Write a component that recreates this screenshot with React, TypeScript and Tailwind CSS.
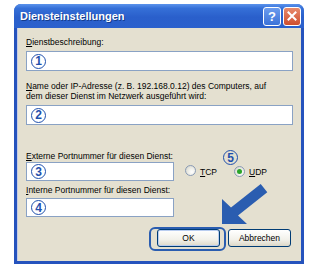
import React from "react";

function Num({ n }: { n: string }) {
  return (
    <span className="inline-flex items-center justify-center w-[15px] h-[15px] rounded-full border-[1.5px] border-[#1f50ad] text-[#1f50ad] text-[12px] font-bold leading-none">
      {n}
    </span>
  );
}

function Radio({ checked }: { checked?: boolean }) {
  return (
    <span className="inline-flex items-center justify-center w-[11px] h-[11px] rounded-full border border-[#8a9bb5] bg-[radial-gradient(circle_at_65%_65%,#ffffff_0%,#e8e8e0_55%,#c9cbc2_100%)]">
      {checked && <span className="w-[5px] h-[5px] rounded-full bg-[#2aa52a]" />}
    </span>
  );
}

export default function App() {
  return (
    <div className="relative w-[319px] h-[264px] bg-white pl-[14px] pt-[4px] overflow-hidden font-['Liberation_Sans',Arial,sans-serif] text-black">
      <div className="w-[290px] h-[260px] flex flex-col rounded-t-[7px] bg-[#2553bd]">
        {/* Title bar */}
        <div className="h-[24px] flex items-center pl-[6px] pr-[3px] rounded-t-[7px] bg-[linear-gradient(180deg,#5b93ec_0%,#3570d8_18%,#2a5fcb_55%,#2b61cd_100%)]">
          <span className="flex-1 text-white font-bold text-[11px] leading-none [text-shadow:1px_1px_0_#143c8c]">
            Diensteinstellungen
          </span>
          <div className="flex gap-[2px]">
            <div className="w-[18px] h-[19px] rounded-[3px] border border-white bg-[linear-gradient(180deg,#6c9cee,#3c72d8)] flex items-center justify-center text-white font-bold text-[13px] leading-none">
              ?
            </div>
            <div className="w-[18px] h-[19px] rounded-[3px] border border-white bg-[linear-gradient(180deg,#e88a6c,#cf4f2f)] flex items-center justify-center">
              <svg width="10" height="10" viewBox="0 0 10 10">
                <path d="M1.5 1.5 L8.5 8.5 M8.5 1.5 L1.5 8.5" stroke="white" strokeWidth="2" strokeLinecap="square" />
              </svg>
            </div>
          </div>
        </div>
        {/* Body */}
        <div className="flex-1 mx-[3px] mb-[3px] bg-[#e4e0d0] border-l border-[#c4cbe6] pt-[9px] pl-[8px] pr-[8px] flex flex-col text-[8.5px] leading-[10px]">
          <div>
            <u>D</u>ienstbeschreibung:
          </div>
          <div className="mt-[4px] h-[20px] bg-white border border-[#8aa2c4] flex items-center pl-[4px]">
            <Num n="1" />
          </div>
          <div className="mt-[10px]">
            <u>N</u>ame oder IP-Adresse (z. B. 192.168.0.12) des Computers, auf
            <br />
            dem dieser Dienst im Netzwerk ausgeführt wird:
          </div>
          <div className="mt-[4px] h-[20px] bg-white border border-[#8aa2c4] flex items-center pl-[4px]">
            <Num n="2" />
          </div>
          <div className="mt-[26px]">
            <u>E</u>xterne Portnummer für diesen Dienst:
          </div>
          <div className="mt-[1px] flex items-center relative">
            <div className="w-[148px] h-[19px] bg-white border border-[#8aa2c4] flex items-center pl-[4px]">
              <Num n="3" />
            </div>
            <span className="ml-[11px]">
              <Radio />
            </span>
            <span className="ml-[4px]">
              <u>T</u>CP
            </span>
            <span className="ml-[17px]">
              <Radio checked />
            </span>
            <span className="ml-[4px]">
              <u>U</u>DP
            </span>
            <span className="absolute left-[197px] -top-[12px]">
              <Num n="5" />
            </span>
          </div>
          <div className="mt-[4px]">
            <u>I</u>nterne Portnummer für diesen Dienst:
          </div>
          <div className="mt-[3px] w-[148px] h-[19px] bg-white border border-[#8aa2c4] flex items-center pl-[4px]">
            <Num n="4" />
          </div>
          <div className="mt-[12px] mr-[2px] flex justify-end gap-[8px]">
            <div className="relative">
              <div className="w-[63px] h-[18px] rounded-[3px] border border-[#003c74] bg-[linear-gradient(180deg,#ffffff,#f2f1ea_60%,#dcd8c8)] flex items-center justify-center shadow-[inset_0_0_0_1px_#b9cdf0]">
                OK
              </div>
              <div className="absolute -left-[8px] -right-[6px] -top-[2px] -bottom-[4px] border-[2.5px] border-[#2a5db0] rounded-[6px]" />
            </div>
            <div className="w-[63px] h-[18px] rounded-[3px] border border-[#003c74] bg-[linear-gradient(180deg,#ffffff,#f2f1ea_60%,#dcd8c8)] flex items-center justify-center">
              Abbrechen
            </div>
          </div>
        </div>
      </div>
      {/* Annotation arrow */}
      <svg className="absolute left-0 top-0 pointer-events-none" width="319" height="264" viewBox="0 0 319 264">
        <polygon
          points="222,224 222,199 231,207.5 260.7,184 267.3,192.3 238,215.5 247,224"
          fill="#2a5db0"
        />
      </svg>
    </div>
  );
}
